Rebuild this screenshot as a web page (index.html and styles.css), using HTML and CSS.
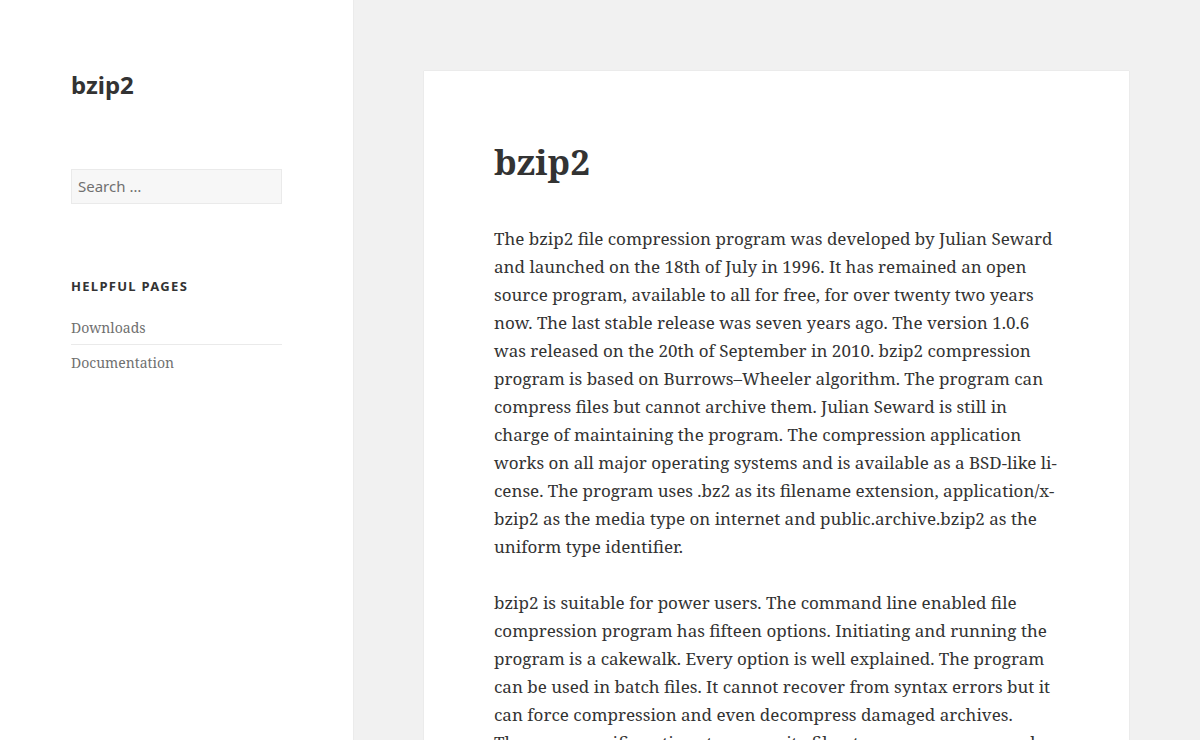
FILE: index.html
```html
<!DOCTYPE html>
<html lang="en">
<head>
<meta charset="utf-8">
<title>bzip2</title>
<link rel="stylesheet" href="styles.css">
</head>
<body>
<div class="page">
  <aside class="sidebar">
    <header class="site-header">
      <p class="site-title">bzip2</p>
    </header>
    <form class="search-form">
      <input class="search-field" type="search" placeholder="Search …">
    </form>
    <section class="widget">
      <h2 class="widget-title">Helpful Pages</h2>
      <ul class="widget-list">
        <li><a href="#">Downloads</a></li>
        <li><a href="#">Documentation</a></li>
      </ul>
    </section>
  </aside>
  <main class="site-main">
    <article class="hentry">
      <header class="entry-header">
        <h1 class="entry-title">bzip2</h1>
      </header>
      <div class="entry-content">
        <p>The bzip2 file compression program was developed by Julian Seward<br>and launched on the 18th of July in 1996. It has remained an open<br>source program, available to all for free, for over twenty two years<br>now. The last stable release was seven years ago. The version 1.0.6<br>was released on the 20th of September in 2010. bzip2 compression<br>program is based on Burrows–Wheeler algorithm. The program can<br>compress files but cannot archive them. Julian Seward is still in<br>charge of maintaining the program. The compression application<br>works on all major operating systems and is available as a BSD-like li-<br>cense. The program uses .bz2 as its filename extension, application/x-<br>bzip2 as the media type on internet and public.archive.bzip2 as the<br>uniform type identifier.</p>
        <p>bzip2 is suitable for power users. The command line enabled file<br>compression program has fifteen options. Initiating and running the<br>program is a cakewalk. Every option is well explained. The program<br>can be used in batch files. It cannot recover from syntax errors but it<br>can force compression and even decompress damaged archives.<br>There are specific options to overwrite files, to suppress errors and<br>to keep the input files after compression or decompression.</p>
      </div>
    </article>
  </main>
</div>
</body>
</html>
```
FILE: styles.css
```css
html, body {
  margin: 0;
  padding: 0;
}
body {
  background: #f1f1f1;
  color: #333333;
  font-family: "Noto Serif", "DejaVu Serif Condensed", "DejaVu Serif", serif;
  font-size: 17px;
  line-height: 28px;
  overflow: hidden;
}
.page {
  display: flex;
  min-height: 740px;
}
.sidebar {
  width: 353px;
  flex: 0 0 353px;
  background: #ffffff;
  box-shadow: 0 0 1px rgba(0, 0, 0, 0.15);
  padding: 70px 71px 0 71px;
  box-sizing: border-box;
}
.site-header {
  margin: 0;
}
.site-title {
  margin: 0;
  font-family: "Noto Sans", "Open Sans", sans-serif;
  font-weight: 700;
  font-size: 24px;
  line-height: 30px;
  color: #333333;
}
.search-form {
  margin: 69px 0 0 0;
}
.search-field {
  display: block;
  width: 211px;
  height: 35px;
  box-sizing: border-box;
  margin: 0;
  padding: 0 6px 1px 6px;
  background: #f7f7f7;
  border: 1px solid #eaeaea;
  border-radius: 0;
  font-family: "Noto Sans", "Open Sans", sans-serif;
  font-size: 15px;
  color: #707070;
  outline: none;
  -webkit-appearance: none;
  appearance: none;
}
.search-field::placeholder {
  color: #707070;
}
.widget {
  margin-top: 73px;
  width: 211px;
}
.widget-title {
  margin: 0;
  font-family: "Noto Sans", "Open Sans", sans-serif;
  font-weight: 700;
  font-size: 13px;
  line-height: 18px;
  letter-spacing: 0.1em;
  text-transform: uppercase;
  color: #333333;
}
.widget-list {
  list-style: none;
  margin: 22px 0 0 0;
  padding: 0;
}
.widget-list li {
  font-size: 14px;
  line-height: 22px;
  padding: 0 0 5px 0;
}
.widget-list li + li {
  border-top: 1px solid #eaeaea;
  padding-top: 7px;
}
.widget-list a {
  color: #707070;
  text-decoration: none;
}
.site-main {
  flex: 1;
  padding: 71px 0 0 71px;
}
.hentry {
  width: 705px;
  min-height: 700px;
  background: #ffffff;
  box-shadow: 0 0 1px rgba(0, 0, 0, 0.15);
  padding: 67px 70px 0 70px;
  box-sizing: border-box;
}
.entry-header {
  margin: 0 0 39px 0;
}
.entry-title {
  margin: 0;
  font-size: 35px;
  line-height: 48px;
  font-weight: 700;
  color: #333333;
}
.entry-content p {
  margin: 0 0 28px 0;
  white-space: nowrap;
}
```
